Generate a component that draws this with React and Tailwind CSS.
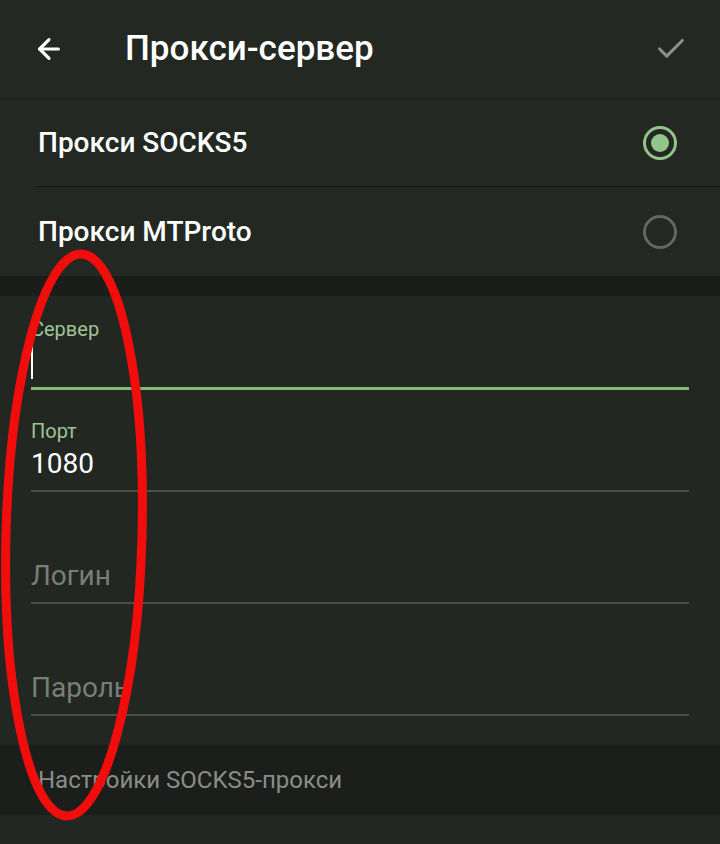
import { ArrowLeft, Check } from "lucide-react";

const font = { fontFamily: "Roboto, 'Noto Sans', sans-serif" };

const Radio = ({ checked }) =>
  checked ? (
    <span className="shrink-0 w-[34px] h-[34px] rounded-full border-[3px] border-[#93c48a] flex items-center justify-center">
      <span className="w-[18px] h-[18px] rounded-full bg-[#93c48a]"></span>
    </span>
  ) : (
    <span className="shrink-0 block w-[34px] h-[34px] rounded-full border-[3px] border-[#62675f]"></span>
  );

const Field = ({ label, value, placeholder, focused, className }) => (
  <div className={className}>
    {label && (
      <div className="text-[20px] leading-[22px] text-[#9fc493]">{label}</div>
    )}
    <div className="h-[40px] flex items-center text-[28px] pt-[4px]">
      {focused && <span className="w-[2px] h-[34px] bg-white"></span>}
      {value && <span className="text-white">{value}</span>}
      {placeholder && <span className="text-[#7a7e76]">{placeholder}</span>}
    </div>
    <div
      className={
        focused
          ? "mt-[7px] h-[3px] bg-[#86b878]"
          : "mt-[8px] h-[2px] bg-[#4b5047]"
      }
    ></div>
  </div>
);

export default function App() {
  return (
    <div className="relative w-[720px] h-[844px] overflow-hidden bg-[#222722] text-white" style={font}>
      {/* header */}
      <div className="h-[99px] flex items-center border-b border-[#1b1e1a] bg-[#232823]">
        <ArrowLeft className="ml-[33px] text-white" size={32} strokeWidth={2.4} />
        <div className="ml-[60px] text-[35px] font-medium">Прокси-сервер</div>
        <Check className="ml-auto mr-[32px] text-[#8b8f88]" size={34} strokeWidth={2.2} />
      </div>

      {/* type */}
      <div className="bg-[#232823]">
        <div className="h-[87px] flex items-center pl-[38px] pr-[43px]">
          <span className="text-[28px] font-medium">Прокси SOCKS5</span>
          <span className="ml-auto"><Radio checked /></span>
        </div>
        <div className="ml-[36px] h-px bg-[#151714]"></div>
        <div className="h-[89px] flex items-center pl-[38px] pr-[43px]">
          <span className="text-[28px] font-medium">Прокси MTProto</span>
          <span className="ml-auto"><Radio /></span>
        </div>
      </div>

      <div className="h-[20px] bg-[#1a1d19]"></div>

      {/* form */}
      <div className="h-[449px] px-[31px] pt-[22px] bg-[#222722]">
        <Field label="Сервер" focused />
        <Field className="mt-[30px]" label="Порт" value="1080" />
        <Field className="mt-[62px]" placeholder="Логин" />
        <Field className="mt-[62px]" placeholder="Пароль" />
      </div>

      {/* footer */}
      <div className="h-[70px] bg-[#1b1e1a] flex items-center pl-[38px]">
        <span className="text-[24px] text-[#8a8d87]">Настройки SOCKS5-прокси</span>
      </div>
      <div className="h-[29px] bg-[#222722]"></div>

      {/* red annotation */}
      <svg className="absolute left-0 top-0 pointer-events-none" width="720" height="844">
        <ellipse cx="74" cy="535" rx="68" ry="281" fill="none" stroke="#f20d0d" strokeWidth="9" transform="rotate(1.5 74 535)" />
      </svg>
    </div>
  );
}
